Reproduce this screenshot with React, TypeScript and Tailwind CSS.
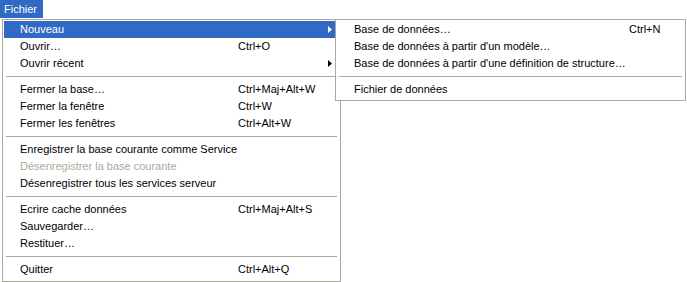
type Entry =
  | { sep: true }
  | { sep?: false; label: string; shortcut?: string; arrow?: boolean; active?: boolean; disabled?: boolean }

const mainItems: Entry[] = [
  { label: 'Nouveau', arrow: true, active: true },
  { label: 'Ouvrir…', shortcut: 'Ctrl+O' },
  { label: 'Ouvrir récent', arrow: true },
  { sep: true },
  { label: 'Fermer la base…', shortcut: 'Ctrl+Maj+Alt+W' },
  { label: 'Fermer la fenêtre', shortcut: 'Ctrl+W' },
  { label: 'Fermer les fenêtres', shortcut: 'Ctrl+Alt+W' },
  { sep: true },
  { label: 'Enregistrer la base courante comme Service' },
  { label: 'Désenregistrer la base courante', disabled: true },
  { label: 'Désenregistrer tous les services serveur' },
  { sep: true },
  { label: 'Ecrire cache données', shortcut: 'Ctrl+Maj+Alt+S' },
  { label: 'Sauvegarder…' },
  { label: 'Restituer…' },
  { sep: true },
  { label: 'Quitter', shortcut: 'Ctrl+Alt+Q' },
]

const subItems: Entry[] = [
  { label: 'Base de données…', shortcut: 'Ctrl+N' },
  { label: "Base de données à partir d'un modèle…" },
  { label: "Base de données à partir d'une définition de structure…" },
  { sep: true },
  { label: 'Fichier de données' },
]

const Arrow = ({ white }: { white?: boolean }) => (
  <svg width="4" height="7" viewBox="0 0 4 7" className="block">
    <path d="M0 0 L4 3.5 L0 7 Z" fill={white ? '#ffffff' : '#000000'} />
  </svg>
)

const MenuList = ({ items, labelW, padL }: { items: Entry[]; labelW: string; padL: string }) => (
  <div className="flex flex-col">
    {items.map((it, i) =>
      it.sep ? (
        <div key={i} className="h-[9px] pt-[4px] px-[2px]">
          <div className="h-px bg-[#aca899]" />
        </div>
      ) : (
        <div
          key={i}
          className={`flex h-[17px] items-center whitespace-nowrap ${padL} ${
            it.active ? 'bg-[#316ac5] text-white' : it.disabled ? 'text-[#aca899]' : 'text-black'
          }`}
        >
          <span className={`${labelW} shrink-0`}>{it.label}</span>
          <span className="flex-1">{it.shortcut}</span>
          {it.arrow && (
            <span className="mr-[7px]">
              <Arrow white={it.active} />
            </span>
          )}
        </div>
      )
    )}
  </div>
)

export default function App() {
  return (
    <div
      className="relative w-[687px] h-[282px] bg-white text-[11px] leading-[17px] overflow-hidden"
      style={{ fontFamily: '"Liberation Sans", Arial, sans-serif' }}
    >
      {/* menu bar */}
      <div className="flex h-[19px]">
        <div className="w-[43px] h-[18px] bg-[#316ac5] text-white pl-[4px] leading-[18px]">Fichier</div>
      </div>

      {/* Fichier dropdown */}
      <div className="absolute left-[2px] top-[19px] w-[339px] h-[263px] border border-[#aca899] bg-white pt-[1px] pb-[3px] px-[1px]">
        <MenuList items={mainItems} labelW="w-[218px]" padL="pl-[16px]" />
      </div>

      {/* Nouveau submenu */}
      <div className="absolute left-[335px] top-[19px] w-[351px] h-[82px] border border-[#aca899] bg-white pt-[1px] pb-[2px] px-[1px]">
        <MenuList items={subItems} labelW="w-[275px]" padL="pl-[17px]" />
      </div>
    </div>
  )
}
